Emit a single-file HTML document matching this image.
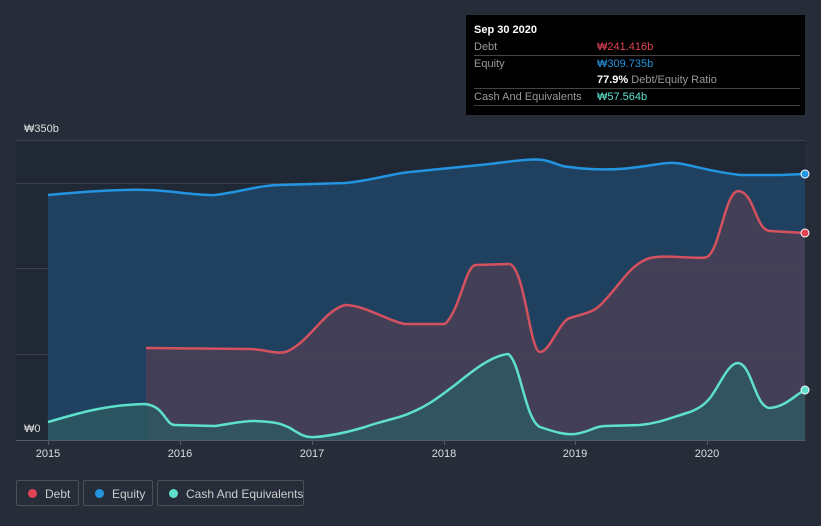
<!DOCTYPE html>
<html><head><style>
body{margin:0;width:821px;height:526px;background:#262d39;font-family:"Liberation Sans",sans-serif;overflow:hidden;position:relative}
.tip{position:absolute;left:466px;top:15px;width:339px;height:100px;background:#000;color:#fff;font-size:11px}
.tip .r{position:absolute;left:8px;width:326px;border-bottom:1px solid #444;height:16px;line-height:16px;color:#999}
.tip b{font-weight:bold}
.leg{position:absolute;top:480px;height:26px;border:1px solid #4a505a;border-radius:2px;color:#ccc;font-size:12px;line-height:26px;box-sizing:border-box;white-space:nowrap}
.leg i{position:absolute;left:11px;top:8px;width:9px;height:9px;border-radius:50%}
.leg span{position:absolute;left:28px}
</style></head><body>
<svg width="821" height="526" style="position:absolute;left:0;top:0">
<rect x="16" y="140" width="789" height="300" fill="#212835"/>
<g stroke="#3a414c" stroke-width="1">
<line x1="16" y1="140.5" x2="805" y2="140.5"/>
<line x1="16" y1="183.5" x2="805" y2="183.5"/>
<line x1="16" y1="268.5" x2="805" y2="268.5"/>
<line x1="16" y1="354.5" x2="805" y2="354.5"/>
</g>
<path d="M48,195 C80,192 120,189 148,190 C165,190 200,196 215,195 C235,193 260,185 280,185 L345,183 C370,181 395,173 410,172 C430,170 460,167 480,165 C500,163 530,158 543,160 C555,162 560,167 570,167 C590,170 615,170 630,168 C650,166 665,162 675,163 C690,164 705,171 740,175 L780,175 L805,174 L805,440 L48,440 Z" fill="#1f4566" fill-opacity="0.85"/>
<path d="M146,348 L250,349 C270,350 280,356 290,350 C310,340 325,310 345,305 C365,305 390,322 405,324 L445,324 C460,310 465,268 475,265 L510,264 C525,270 530,352 540,352 C550,352 560,320 570,318 C585,313 595,313 605,300 C620,285 630,264 650,258 C665,254 700,260 707,257 C720,250 725,192 738,191 C755,192 755,230 770,231 L805,233 L805,440 L146,440 Z" fill="#4a3f55" fill-opacity="0.85"/>
<path d="M48,422 C70,416 100,405 145,404 C165,406 165,425 175,425 L215,426 C230,424 240,421 255,421 C275,422 280,423 290,428 C300,434 305,438 315,437 C330,436 345,433 365,427 C385,420 400,418 410,413 C430,405 444,393 455,385 C470,373 490,356 508,354 C520,360 525,420 540,427 C555,432 565,435 575,434 C590,432 595,426 605,426 L640,425 C660,423 670,418 690,412 C700,408 705,404 710,398 C720,385 728,363 738,363 C752,364 755,408 770,408 C785,407 795,395 805,390 L805,440 L48,440 Z" fill="#2d5a60" fill-opacity="0.8"/>
<path d="M48,195 C80,192 120,189 148,190 C165,190 200,196 215,195 C235,193 260,185 280,185 L345,183 C370,181 395,173 410,172 C430,170 460,167 480,165 C500,163 530,158 543,160 C555,162 560,167 570,167 C590,170 615,170 630,168 C650,166 665,162 675,163 C690,164 705,171 740,175 L780,175 L805,174" fill="none" stroke="#2394df" stroke-width="2.5"/>
<path d="M146,348 L250,349 C270,350 280,356 290,350 C310,340 325,310 345,305 C365,305 390,322 405,324 L445,324 C460,310 465,268 475,265 L510,264 C525,270 530,352 540,352 C550,352 560,320 570,318 C585,313 595,313 605,300 C620,285 630,264 650,258 C665,254 700,260 707,257 C720,250 725,192 738,191 C755,192 755,230 770,231 L805,233" fill="none" stroke="#d4515f" stroke-width="2.5"/>
<path d="M48,422 C70,416 100,405 145,404 C165,406 165,425 175,425 L215,426 C230,424 240,421 255,421 C275,422 280,423 290,428 C300,434 305,438 315,437 C330,436 345,433 365,427 C385,420 400,418 410,413 C430,405 444,393 455,385 C470,373 490,356 508,354 C520,360 525,420 540,427 C555,432 565,435 575,434 C590,432 595,426 605,426 L640,425 C660,423 670,418 690,412 C700,408 705,404 710,398 C720,385 728,363 738,363 C752,364 755,408 770,408 C785,407 795,395 805,390" fill="none" stroke="#5ee0cc" stroke-width="2.5"/>
<circle cx="805" cy="174" r="4" fill="#2394df" stroke="#fff" stroke-width="1"/>
<circle cx="805" cy="233" r="4" fill="#e04452" stroke="#fff" stroke-width="1"/>
<circle cx="805" cy="390" r="4" fill="#5ee0cc" stroke="#fff" stroke-width="1"/>
<line x1="16" y1="440.5" x2="805" y2="440.5" stroke="#555b66"/>
<g stroke="#555b66"><line x1="48.5" y1="440" x2="48.5" y2="445"/><line x1="180.5" y1="440" x2="180.5" y2="445"/><line x1="312.5" y1="440" x2="312.5" y2="445"/><line x1="444.5" y1="440" x2="444.5" y2="445"/><line x1="575.5" y1="440" x2="575.5" y2="445"/><line x1="707.5" y1="440" x2="707.5" y2="445"/></g>
<g fill="#ddd" font-size="11" text-anchor="middle" font-family="Liberation Sans,sans-serif">
<text x="48" y="457">2015</text><text x="180" y="457">2016</text><text x="312" y="457">2017</text><text x="444" y="457">2018</text><text x="575" y="457">2019</text><text x="707" y="457">2020</text>
</g>
<text x="24" y="132" fill="#ddd" font-size="11">₩350b</text>
<text x="24" y="432" fill="#ddd" font-size="11">₩0</text>
</svg>
<div class="tip">
<div style="position:absolute;left:8px;top:9px;font-weight:bold;font-size:11px">Sep 30 2020</div>
<div class="r" style="top:24px">Debt<span style="position:absolute;left:123px;color:#e04452">₩241.416b</span></div>
<div class="r" style="top:41px;border:none">Equity<span style="position:absolute;left:123px;color:#2394df">₩309.735b</span></div>
<div class="r" style="top:57px"><span style="position:absolute;left:123px"><b style="color:#fff">77.9%</b> Debt/Equity Ratio</span></div>
<div class="r" style="top:74px">Cash And Equivalents<span style="position:absolute;left:123px;color:#5ee0cc">₩57.564b</span></div>
</div>
<div class="leg" style="left:16px;width:63px"><i style="background:#e04452"></i><span>Debt</span></div>
<div class="leg" style="left:83px;width:70px"><i style="background:#2394df"></i><span>Equity</span></div>
<div class="leg" style="left:157px;width:147px"><i style="background:#5ee0cc"></i><span>Cash And Equivalents</span></div>
</body></html>
